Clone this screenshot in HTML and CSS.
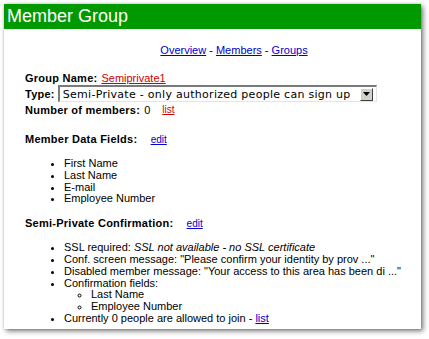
FILE: index.html
```html
<!DOCTYPE html>
<html>
<head>
  <title>Member Group</title>
  <link rel="stylesheet" href="styles.css">
</head>
<body>
  <div class="window">
    <div class="title-bar">Member Group</div>
    <div class="content">
      <div class="nav"><a href="#">Overview</a> - <a href="#">Members</a> - <a href="#">Groups</a></div>

      <div class="fields">
        <div class="field"><b>Group Name:</b> <a class="red" href="#">Semiprivate1</a></div>
        <div class="field">
          <b>Type:</b>
          <div class="select">
            <span class="select-text">Semi-Private - only authorized people can sign up</span>
            <span class="select-arrow">
              <svg width="7" height="4" viewBox="0 0 7 4"><path d="M0 0h7L3.5 4z" fill="#000"/></svg>
            </span>
          </div>
        </div>
        <div class="field"><b>Number of members:</b> 0 <a class="red small count-link" href="#">list</a></div>
      </div>

      <!-- Member data fields -->
      <div class="section">
        <h2>Member Data Fields: <a class="small edit" href="#">edit</a></h2>
        <ul>
          <li>First Name</li>
          <li>Last Name</li>
          <li>E-mail</li>
          <li>Employee Number</li>
        </ul>
      </div>

      <!-- Confirmation settings -->
      <div class="section">
        <h2>Semi-Private Confirmation: <a class="small edit" href="#">edit</a></h2>
        <ul>
          <li>SSL required: <i>SSL not available - no SSL certificate</i></li>
          <li>Conf. screen message: "Please confirm your identity by prov ..."</li>
          <li>Disabled member message: "Your access to this area has been di ..."</li>
          <li>Confirmation fields:
            <ul>
              <li>Last Name</li>
              <li>Employee Number</li>
            </ul>
          </li>
          <li>Currently 0 people are allowed to join - <a href="#">list</a></li>
        </ul>
      </div>
    </div>
  </div>
</body>
</html>
```

FILE: styles.css
```css
body {
  margin: 0;
  padding: 4px 8px 10px 4px;
  background: #fff;
  font-family: "Liberation Sans", Arial, sans-serif;
  font-size: 11px;
  color: #000;
}

.window {
  width: 417px;
  height: 325px;
  background: #fff;
  box-shadow: 0 0 2px rgba(0, 0, 0, 0.15), 2px 2px 5px rgba(0, 0, 0, 0.55);
  overflow: hidden;
}

.title-bar {
  height: 25px;
  line-height: 25px;
  padding-left: 3px;
  background: #009900;
  color: #fff;
  font-size: 18px;
}

.content {
  padding: 15px 0 0 21px;
}

a {
  color: #0000cc;
}

a.red {
  color: #cc0000;
}

.small {
  font-size: 10px;
}

b, h2 {
  letter-spacing: 0.25px;
}

.nav {
  text-align: center;
  padding-left: 22px;
  line-height: 13px;
}

.fields {
  margin-top: 14px;
}

.field {
  display: flex;
  align-items: center;
  gap: 4px;
  min-height: 13px;
}

.field b {
  white-space: nowrap;
}

.count-link {
  margin-left: 8px;
}

.select {
  width: 319px;
  height: 17px;
  box-sizing: border-box;
  display: flex;
  align-items: center;
  border-top: 2px solid #7a7a7a;
  border-left: 2px solid #7a7a7a;
  border-right: 1px solid #e4e4e4;
  border-bottom: 1px solid #e4e4e4;
  background: #fff;
  margin: 1px 0 1px -1px;
}

.select-text {
  flex: 1;
  padding-left: 3px;
  font-family: "DejaVu Sans", Verdana, sans-serif;
  font-size: 11px;
  letter-spacing: 0.28px;
  white-space: nowrap;
}

.select-arrow {
  width: 13px;
  height: 13px;
  box-sizing: border-box;
  margin-right: 3px;
  display: flex;
  align-items: center;
  justify-content: center;
  background: #d4d0c8;
  border-top: 1px solid #fff;
  border-left: 1px solid #fff;
  border-right: 1px solid #404040;
  border-bottom: 1px solid #404040;
}

.section h2 {
  margin: 12px 0 0;
  font-size: 11px;
  line-height: 13px;
}

.fields + .section h2 {
  margin-top: 17px;
}

.edit {
  margin-left: 10px;
  font-weight: normal;
  letter-spacing: 0;
}

ul {
  margin: 12px 0 0;
  padding-left: 39px;
  line-height: 11.8px;
}

ul ul {
  margin: 0;
  padding-left: 27px;
  list-style-type: circle;
}
```
